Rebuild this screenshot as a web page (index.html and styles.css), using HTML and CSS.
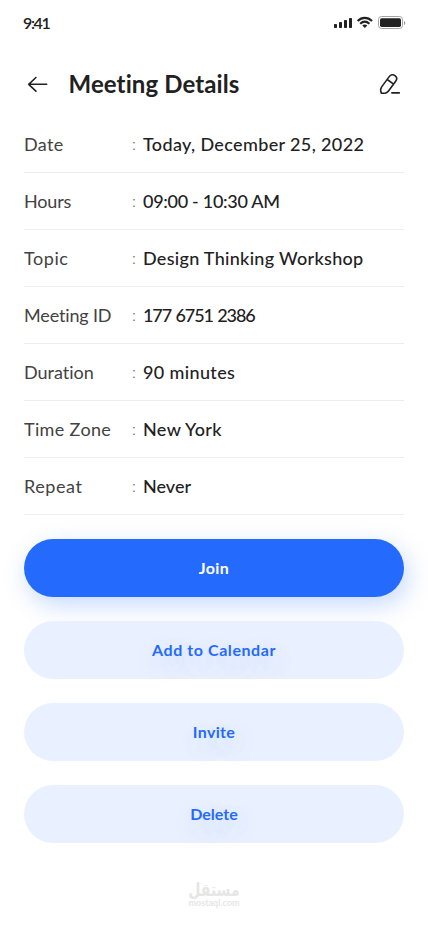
FILE: index.html
```html
<!DOCTYPE html>
<html lang="en">
<head>
<meta charset="utf-8">
<title>Meeting Details</title>
<link rel="stylesheet" href="styles.css">
</head>
<body>
<main class="screen">
  <div class="status-bar">
    <span class="time">9:41</span>
    <svg class="status-icons" viewBox="0 0 72 16" aria-hidden="true">
      <g fill="#212121">
        <rect x="0" y="10" width="3" height="4" rx=".7"/>
        <rect x="5" y="8" width="3" height="6" rx=".7"/>
        <rect x="10" y="6" width="3" height="8" rx=".7"/>
        <rect x="15" y="4" width="3" height="10" rx=".7"/>
        <rect x="46" y="4.300" width="21" height="8.600" rx="1.700"/>
        <path d="M70 7v4c1.700-.8 1.700-3.200 0-4z" opacity=".5"/>
      </g>
      <path d="M23.600 6.900c4.300-4.100 10.100-4.100 14.400 0M26.200 9.800c2.800-2.600 6.400-2.600 9.200 0" fill="none" stroke="#212121" stroke-width="2.100"/>
      <path d="M28.300 11.400c1.500-1.300 3.500-1.300 5 0l-2.500 2.600z" fill="#212121"/>
      <rect x="44.500" y="2.500" width="24" height="12" rx="3" fill="none" stroke="#a3a3a3"/>
    </svg>
  </div>
  <header class="header">
    <svg class="back" viewBox="0 0 28 28" aria-hidden="true"><path d="M22.700 14.300H4.700M11.900 7.500L4.700 14.300l7.200 6.800"/></svg>
    <h1>Meeting Details</h1>
    <svg class="edit" viewBox="0 0 28 28" aria-hidden="true"><path d="M13.200 6.600C14.800 4.400 17.100 4.200 19 5.600S21.200 9.200 19.700 11.300L12.300 21.300C11.500 22.500 10.300 23.100 9 23.200H5.400C4.600 21.200 4.100 19 5.500 17.100ZM11.300 9.500L16.900 13.700M15.900 22.900H23.300"/></svg>
  </header>
  <dl class="details">
    <div class="row"><dt><span class="track-m">Date</span></dt><dd><span class="track-m">Today, December 25, 2022</span></dd></div>
    <div class="row"><dt><span class="track-tight">Hours</span></dt><dd><span class="hours">09:00 - 10:30 AM</span></dd></div>
    <div class="row"><dt><span class="track-l">Topic</span></dt><dd><span class="track-s">Design Thinking Workshop</span></dd></div>
    <div class="row"><dt><span class="track-tight">Meeting ID</span></dt><dd><span class="number">177 6751 2386</span></dd></div>
    <div class="row"><dt><span>Duration</span></dt><dd><span class="track-m">90 minutes</span></dd></div>
    <div class="row"><dt><span class="track-m">Time Zone</span></dt><dd><span class="track-m">New York</span></dd></div>
    <div class="row"><dt><span class="track-l">Repeat</span></dt><dd><span>Never</span></dd></div>
  </dl>
  <div class="actions">
    <button class="btn primary"><span class="track-m">Join</span></button>
    <button class="btn"><span class="track-l">Add to Calendar</span></button>
    <button class="btn"><span class="track-m">Invite</span></button>
    <button class="btn"><span>Delete</span></button>
  </div>
  <footer class="brand">
    <span class="brand-ar" lang="ar" dir="rtl">مستقل</span>
    <span class="brand-en">mostaql.com</span>
  </footer>
</main>
</body>
</html>
```
FILE: styles.css
```css
* { box-sizing: border-box; }
body { margin: 0; background: #fff; color: #212121; font-family: Lato, "Liberation Sans", sans-serif; font-variant-ligatures: none; }
.screen { width: 428px; height: 926px; padding: 0 24px; overflow: hidden; }
.status-bar { height: 44px; display: flex; justify-content: space-between; align-items: center; }
.time { font-size: 16px; font-weight: 600; margin-left: -1px; letter-spacing: -1.4px; }
.status-icons { width: 72px; height: 16px; margin-right: -2px; }
.header { height: 80px; display: flex; align-items: center; }
.header svg { width: 28px; height: 28px; fill: none; stroke: #212121; stroke-width: 1.6; stroke-linecap: round; stroke-linejoin: round; }
h1 { flex: 1; margin: 0 0 0 16.5px; font-size: 24px; line-height: 30px; font-weight: 700; letter-spacing: .1px; }
.details { margin: 0; }
.row { height: 57px; display: flex; align-items: center; border-bottom: 1px solid #eee; font-size: 18px; line-height: 26px; }
.row:first-child { height: 49px; padding-bottom: 8px; }
dt { width: 108px; color: #424242; }
dd { margin: 0; display: flex; font-weight: 500; }
dd::before { content: ":"; width: 11px; font-size: 16px; font-weight: 300; color: #616161; }
.track-tight { letter-spacing: -.15px; }
.track-s { letter-spacing: .3px; }
.track-m { letter-spacing: .36px; }
.track-l { letter-spacing: .58px; }
.hours { letter-spacing: -.29px; }
.number { letter-spacing: -1.1px; word-spacing: 1px; }
.actions { margin-top: 24px; display: grid; gap: 24px; }
.btn { height: 58px; padding: 0 0 2px; border: 0; border-radius: 29px; background: #e9f0ff; color: #246bfd; font: 700 16px Lato, "Liberation Sans", sans-serif; text-shadow: 4px 8px 24px rgba(36, 150, 253, .25); }
.primary { background: #246bfd; color: #fff; box-shadow: 4px 8px 24px rgba(36, 107, 253, .25); text-shadow: none; }
.brand { margin-top: 37px; display: grid; justify-items: center; color: #e6e6e6; }
.brand-ar { font: 700 18px/20px "DejaVu Sans", sans-serif; transform: scaleX(.78); }
.brand-en { font-size: 9px; line-height: 9px; margin-top: -2px; font-weight: 700; }
```
